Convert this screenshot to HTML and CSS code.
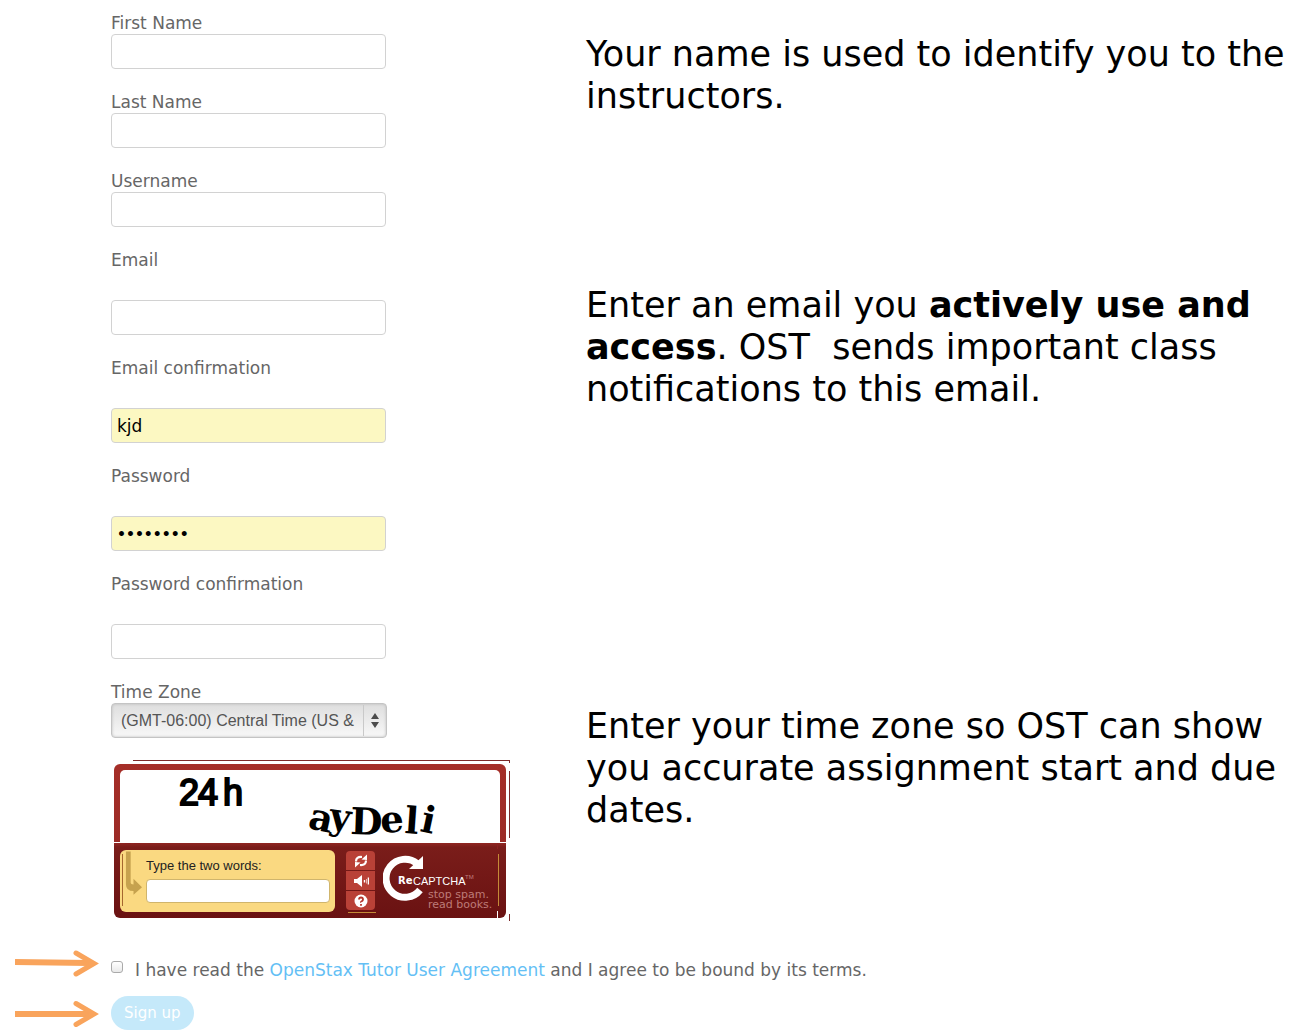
FILE: index.html
```html
<!DOCTYPE html>
<html lang="en">
<head>
<meta charset="utf-8">
<meta name="viewport" content="width=device-width, initial-scale=1">
<title>Sign up</title>
<link rel="stylesheet" href="styles.css">
</head>
<body>
<form class="signup">
  <section class="group">
    <div class="fields">
      <div class="field"><label for="first">First Name</label><input class="text" id="first" type="text"></div>
      <div class="field"><label for="last">Last Name</label><input class="text" id="last" type="text"></div>
      <div class="field"><label for="user">Username</label><input class="text" id="user" type="text"></div>
    </div>
    <p class="note note-name">Your name is used to identify you to the instructors.</p>
  </section>

  <section class="group">
    <div class="fields">
      <div class="field spaced"><label for="email">Email</label><input class="text" id="email" type="text"></div>
      <div class="field spaced"><label for="email2">Email confirmation</label><input class="text filled" id="email2" type="text" value="kjd"></div>
      <div class="field spaced"><label for="pass">Password</label><input class="text filled secret" id="pass" type="password" value="password"></div>
      <div class="field spaced"><label for="pass2">Password confirmation</label><input class="text secret" id="pass2" type="password"></div>
    </div>
    <p class="note note-email">Enter an email you <strong>actively use and access</strong>. OST&nbsp; sends important class notifications to this email.</p>
  </section>

  <section class="group">
    <div class="fields">
      <div class="field">
        <label for="zone">Time Zone</label>
        <div class="select">
          <select id="zone"><option>(GMT-06:00) Central Time (US &amp; Canada)</option></select>
          <svg class="stepper" viewBox="0 0 24 33" aria-hidden="true"><path d="M.5 1v31" stroke="#c9c9c9"/><path d="M8 15l4-6 4 6zM8 18l4 6 4-6z" fill="#4c4c4c"/></svg>
        </div>
      </div>
      <div class="captcha">
        <div class="frame">
          <svg class="words" viewBox="0 0 380 73" role="img" aria-label="Two distorted words">
            <text class="word-one" y="35"><tspan x="59">2</tspan><tspan x="78">4</tspan> <tspan x="103">h</tspan></text>
            <text class="word-two" x="187 208 230 261 284 299" y="58 58 64 63 63 61" rotate="12 8 2 -4 4 12">ayDeli</text>
          </svg>
          <div class="controls">
            <div class="entry">
              <svg class="hook" viewBox="0 0 18 50" aria-hidden="true"><path d="M1 0h5v33q0 2 3 2v-6l9 9-9 8v-4Q1 42 1 35z" fill="#c6a24e"/></svg>
              <div class="entry-body">
                <label for="answer">Type the two words:</label>
                <input id="answer" type="text">
              </div>
            </div>
            <div class="tools">
              <button type="button" aria-label="New challenge"><svg viewBox="0 0 16 16"><path d="M3 8.500Q3 3.500 9 4M13 7.500Q13 12.500 7 12" fill="none" stroke="#fff" stroke-width="2.200"/><path d="M8.500 6.500L14 7V1.500zM7.500 9.500L2 9v5.500z" fill="#fff"/></svg></button>
              <button type="button" aria-label="Audio challenge"><svg viewBox="0 0 16 16"><path d="M1 6h3l5-4v12l-5-4H1z" fill="#fff"/><path d="M11.500 7v2.500M15.400 4.500v7" stroke="#fff" stroke-width="1.400"/><path d="M13.500 6v4.500" stroke="#fff" stroke-width=".6"/></svg></button>
              <button type="button" aria-label="Help"><svg viewBox="0 0 16 16"><circle cx="8" cy="8" r="6.500" fill="#fff"/><path d="M6 6.500q0-2 2-2t2 2q0 1-1.200 1.700T8 9.500M8 11v1.800" fill="none" stroke="#b5372e" stroke-width="1.800"/></svg></button>
            </div>
            <svg class="logo" viewBox="0 0 120 62" role="img" aria-label="reCAPTCHA, stop spam, read books">
              <path d="M34 13.500A19 19 0 1 0 37 40" fill="none" stroke="#fff" stroke-width="7"/>
              <path d="M26 19h14V6z" fill="#fff"/>
              <text class="logo-re" x="15" y="34">Re</text>
              <text class="logo-name" x="30" y="35">CAPTCHA</text>
              <text class="logo-tm" x="82" y="29">TM</text>
              <text class="logo-tag" x="45" y="48">stop spam.</text>
              <text class="logo-tag" x="45" y="58">read books.</text>
            </svg>
          </div>
        </div>
        <svg class="seams" viewBox="1 1 400 164" aria-hidden="true">
          <path d="M23 1.500h376M399.500 1v3M399.500 12v67M399.500 155v7" stroke="#7d2b2b" fill="none"/>
          <path d="M4 83.500h7M388 83.500h8M387.500 152v8" stroke="#fff" fill="none"/>
          <path d="M15 84.500h6M24 84.500h6M387.500 84v6" stroke="#8c2020" fill="none"/>
          <path d="M12.500 95v52" stroke="#a5672f" fill="none"/>
          <path d="M388.500 95v52M238 153.500h28" stroke="#c48b38" fill="none"/>
        </svg>
      </div>
    </div>
    <p class="note note-zone">Enter your time zone so OST can show you accurate assignment start and due dates.</p>
  </section>

  <div class="action">
    <svg class="arrow" viewBox="0 0 84 28" aria-hidden="true"><path d="M0 12l74 1" stroke-width="6"/><path d="M61 3L79 13.500 61 24" stroke-width="5" stroke-linecap="round"/></svg>
    <div class="agree">
      <input type="checkbox" id="agree">
      <label for="agree">I have read the <a href="#">OpenStax Tutor User Agreement</a> and I agree to be bound by its terms.</label>
    </div>
  </div>
  <div class="action">
    <svg class="arrow" viewBox="0 0 84 28" aria-hidden="true"><path d="M0 15h74" stroke-width="6"/><path d="M61 4.500L79 15 61 25.500" stroke-width="5" stroke-linecap="round"/></svg>
    <button class="submit" type="submit">Sign up</button>
  </div>
</form>
</body>
</html>
```
FILE: styles.css
```css
* { box-sizing: border-box; }

body {
  margin: 0;
  background: #fff;
  color: #666;
  font: 17px/22px "DejaVu Sans", Verdana, sans-serif;
}

.signup { padding: 12px 0 6px 15px; }

.group {
  display: grid;
  grid-template-columns: 475px minmax(0, 1fr);
  padding-left: 96px;
}

.fields { display: flex; flex-direction: column; }

.field {
  display: flex;
  flex-direction: column;
  align-items: flex-start;
  padding-bottom: 22px;
}

.spaced { gap: 29px; }

.text {
  width: 275px;
  height: 35px;
  padding: 0 5px;
  border: 1px solid #d2d2d2;
  border-radius: 4px;
  background: #fff;
  color: #000;
  font: inherit;
}

.filled { background: #fcf8c2; }

.secret { font-size: 14px; font-weight: bold; }

.note {
  margin: 0;
  color: #000;
  font-size: 35px;
  line-height: 42px;
}

.note-name { padding-top: 21px; }
.note-email { padding-top: 35px; }
.note-zone { padding-top: 24px; }

.select { position: relative; width: 276px; }

.select select {
  appearance: none;
  display: block;
  width: 100%;
  height: 35px;
  padding: 0 28px 0 9px;
  border: 1px solid #c4c4c4;
  border-radius: 4px;
  background: linear-gradient(#dedede, #f8f8f8);
  box-shadow: inset 0 0 3px #bbb;
  color: #555;
  font: 16px "Liberation Sans", Arial, sans-serif;
  text-overflow: clip;
}

.stepper {
  position: absolute;
  top: 1px;
  right: 0;
  width: 24px;
  height: 33px;
  pointer-events: none;
}

.captcha {
  position: relative;
  width: 400px;
  height: 162px;
  margin-bottom: 25px;
  padding: 4px 3px;
}

.seams {
  position: absolute;
  top: 0;
  left: 0;
  width: 400px;
  height: 164px;
  pointer-events: none;
}

.frame {
  width: 392px;
  height: 154px;
  padding: 6px;
  border-radius: 6px;
  background: linear-gradient(#a52e28, #9c2b26 50%, #7a1d1a 54%, #6a1212);
}

.words {
  display: block;
  width: 100%;
  height: 73px;
  border-radius: 5px 5px 0 0;
  background: #fff;
}

.word-one {
  fill: #000;
  stroke: #000;
  stroke-width: 2px;
  font: 36px "Liberation Sans", Arial, sans-serif;
}

.word-two { fill: #000; font: bold 37px "DejaVu Serif", serif; }

.controls { display: flex; padding-top: 7px; }

.entry {
  display: flex;
  flex: none;
  gap: 4px;
  width: 215px;
  height: 62px;
  padding: 0 5px;
  border-radius: 6px;
  background: #fad981;
}

.hook { width: 18px; height: 50px; }

.entry-body {
  display: flex;
  flex-direction: column;
  padding-top: 6px;
}

.entry-body label {
  color: #222;
  font: 13px/20px "Liberation Sans", Arial, sans-serif;
}

.entry-body input {
  width: 184px;
  height: 24px;
  margin-top: 3px;
  padding: 0 4px;
  border: 1px solid #d0b56c;
  border-radius: 4px;
  background: #fff;
}

.tools {
  display: flex;
  flex: none;
  flex-direction: column;
  gap: 1px;
  width: 29px;
  height: 59px;
  margin: 1px 8px 0 11px;
  border-radius: 4px;
  overflow: hidden;
}

.tools button {
  display: flex;
  flex: 1;
  align-items: center;
  justify-content: center;
  padding: 0;
  border: 0;
  background: #b94137;
}

.tools svg { width: 16px; height: 16px; }

.logo { flex: none; width: 120px; height: 62px; }
.logo-re { fill: #fff; font: bold 10px "DejaVu Sans", sans-serif; }
.logo-name { fill: #fff; font: 11px "Liberation Sans", Arial, sans-serif; }
.logo-tm { fill: #c07f7d; font: 6px "Liberation Sans", Arial, sans-serif; }
.logo-tag { fill: #bd7b78; font: 11px "DejaVu Sans", Verdana, sans-serif; }

.action { display: flex; align-items: center; gap: 12px; }

.arrow { flex: none; width: 84px; height: 28px; fill: none; stroke: #f9a45c; }

.agree { display: flex; gap: 12px; align-items: center; padding-top: 12px; }

.action + .action { padding-top: 15px; }

.agree input {
  appearance: none;
  flex: none;
  width: 12px;
  height: 12px;
  margin: 0 0 6px;
  border: 1px solid #aaa;
  border-radius: 3px;
  background: linear-gradient(#fff, #e9e9e9);
}

.agree a { color: #64bff5; text-decoration: none; }

.submit {
  height: 34px;
  padding: 0 13px;
  border: 0;
  border-radius: 17px;
  background: #c5e9fa;
  color: #fff;
  font: 15px "DejaVu Sans", Verdana, sans-serif;
}
```
